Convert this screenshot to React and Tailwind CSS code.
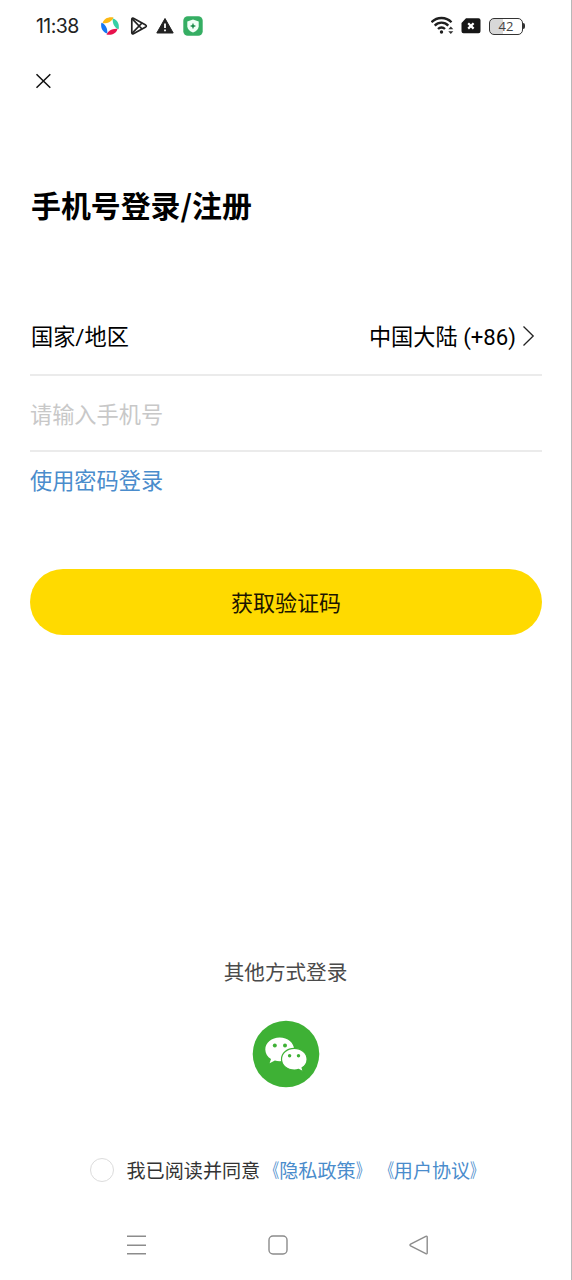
// Status bar along the top of the phone
function StatusBar() {
  return (
    <div className="flex items-center justify-between h-[52px] pl-[36px] pr-[46px]">
      <div className="flex items-center">
        <span className="w-[64px] pt-[2px] text-[19.500px] leading-none tracking-[-0.6px] text-[#222] font-['Inter',sans-serif]">11:38</span>
        <svg className="w-[20px] h-[20px]" viewBox="0 0 20 20">
          <path d="M2.500 7.300C3.500 2.500 8.500.5 13.500 1.400 12.500 4.800 8 7.600 2.500 7.300z" fill="#fcb813" />
          <path d="M12.700 2.500C17.500 3.500 19.700 8.500 18.600 13.200 15 12.200 12.200 8 12.700 2.500z" fill="#35cfa5" />
          <path d="M17.500 12.700C16.500 17.500 11.500 19.500 6.500 18.600 7.500 15.200 12 12.200 17.500 12.700z" fill="#e8124d" />
          <path d="M7.300 17.500C2.500 16.500.3 11.500 1.400 6.800 5 7.800 7.800 12 7.300 17.500z" fill="#1677f2" />
        </svg>
        <svg className="w-[18px] h-[20px] ml-[10px]" viewBox="0 0 18 20" fill="none" stroke="#222" strokeWidth="1.700" strokeLinejoin="round">
          <path d="M1.800 3.200v13.600c0 1 .8 1.400 1.600 1l12.300-6.900c.8-.5.8-1.300 0-1.800L3.400 2.200c-.8-.4-1.600 0-1.600 1z" />
          <path d="M2.200 2.800L12 13M2.200 17.200L12 7" />
        </svg>
        <svg className="w-[18px] h-[18px] ml-[8px]" viewBox="0 0 18 18">
          <path d="M9 1.500L17.200 16H.8z" fill="#222" stroke="#222" strokeLinejoin="round" />
          <path d="M9 6.500v4.500M9 12.500v1.800" stroke="#fff" strokeWidth="1.800" />
        </svg>
        <svg className="w-[20px] h-[20px] ml-[9px]" viewBox="0 0 20 20">
          <rect x=".3" y=".3" width="19.400" height="19.400" rx="4.500" fill="#35ae63" />
          <path d="M10 3.500l5.700 2v4.700c0 3-2.500 5-5.700 6.300-3.200-1.300-5.700-3.300-5.700-6.300V5.500z" fill="#f0fff6" />
          <path d="M10 6.800l.9 2.300 2.200.9-2.200.9-.9 2.300-.9-2.300-2.200-.9 2.200-.9z" fill="#1c8d4c" />
        </svg>
      </div>
      <div className="flex items-center">
        <svg className="w-[24px] h-[20px]" viewBox="0 0 24 20" fill="none" stroke="#1f1f1f" strokeWidth="2.300">
          <path d="M.5 6.200C6 .6 15 .6 20.500 6.200M3.700 9.600c3.800-3.900 9.800-3.900 13.600 0M7 13c2-2 5-2 7 0" />
          <circle cx="10.500" cy="16" r="1.700" fill="#1f1f1f" stroke="none" />
          <path d="M17.300 13.300l2.500-2.800 2.500 2.800zM17.300 15.300l2.500 2.800 2.500-2.800z" fill="#333" stroke="none" />
        </svg>
        <svg className="w-[20px] h-[16px] ml-[6px]" viewBox="0 0 20 16">
          <path d="M5 .3h12.500a2 2 0 012 2v11a2 2 0 01-2 2h-15a2 2 0 01-2-2V5z" fill="#161616" />
          <path d="M7.200 5.200l5.400 5.400M12.600 5.200l-5.400 5.400" stroke="#fff" strokeWidth="2.200" />
        </svg>
        <div className="flex items-center ml-[8px]">
          <div className="flex items-center justify-center w-[34px] h-[17px] rounded-[5px] border-[1.5px] border-[#333] bg-linear-to-r from-[#d8d8d8] from-42% to-white to-42% text-[13px] leading-none text-[#444] font-['Open_Sans',sans-serif]">42</div>
          <div className="w-[2px] h-[6px] rounded-r-sm bg-[#333]" />
        </div>
      </div>
    </div>
  );
}

function WeChatIcon() {
  return (
    <svg className="w-[68px] h-[68px]" viewBox="0 0 68 68">
      <circle cx="34" cy="34" r="33.300" fill="#3eb135" />
      <path d="M27.700 17.500c-8 0-14.400 5.400-14.400 12 0 3.900 2.200 7.300 5.700 9.500l-1.400 4.200 5.300-2.700c1.500.5 3.100.7 4.800.7 8 0 14.400-5.200 14.400-11.700s-6.400-12-14.400-12z" fill="#fff" />
      <path d="M42.300 28.300c-7.100 0-12.800 4.800-12.800 10.900S35.200 50 42.300 50c1.500 0 3-.2 4.300-.6l4.700 2.300-1.200-3.900c3.100-2 5-5.100 5-8.600 0-6.100-5.700-10.900-12.800-10.900z" fill="#fff" stroke="#3eb135" strokeWidth="1.200" />
      <g fill="#3eb135">
        <circle cx="22.800" cy="25.600" r="2" />
        <circle cx="33" cy="25.600" r="2" />
        <circle cx="37.600" cy="35.700" r="1.700" />
        <circle cx="46.500" cy="35.700" r="1.700" />
      </g>
    </svg>
  );
}

// Title-mark brackets are narrowed toward the text they enclose
function DocLink({ children }) {
  return (
    <a className="flex">
      <span className="origin-right scale-x-70">《</span>
      <span>{children}</span>
      <span className="origin-left scale-x-70">》</span>
    </a>
  );
}

// Android navigation keys
function NavBar() {
  return (
    <div className="flex items-center justify-between h-[22px] mt-[50px] pl-[126px] pr-[141px]">
      <svg className="w-[22px] h-[22px]" viewBox="0 0 22 22" stroke="#8c8c8c" strokeWidth="1.500">
        <path d="M1 2.300h19M1 11.200h19M1 19.800h19" />
      </svg>
      <svg className="w-[22px] h-[22px]" viewBox="0 0 22 22" fill="none" stroke="#8c8c8c" strokeWidth="1.400">
        <rect x="2" y="2" width="18" height="18" rx="4" />
      </svg>
      <svg className="w-[22px] h-[22px]" viewBox="0 0 22 22" fill="none" stroke="#8c8c8c" strokeWidth="1.400">
        <path d="M2.600 10.200L17.800 2.300q1.400-.6 1.400.9v15.600q0 1.500-1.400.9L2.600 11.800q-1.300-.8 0-1.600z" />
      </svg>
    </div>
  );
}

export default function App() {
  return (
    <div className="flex flex-col w-[572px] h-[1280px] bg-white border-r border-[#b8b8b8] overflow-hidden text-black font-['Noto_Sans_CJK_SC',sans-serif]">
      <StatusBar />

      <button className="w-[16px] h-[16px] mt-[21px] ml-[35px]" aria-label="关闭">
        <svg className="w-[16px] h-[16px]" viewBox="0 0 16 16" stroke="#111" strokeWidth="1.500">
          <path d="M1.500 1.200l13.800 13.600M15.300 1.200L1.500 14.800" />
        </svg>
      </button>

      <main className="flex flex-col pl-[30px] pr-[29px]">
        <h1 className="mt-[91px] pl-px text-[29.900px] leading-[48px] font-bold">手机号登录/注册</h1>

        <div className="flex items-center justify-between h-[78px] mt-[70px] pt-[4px] pr-[6px] border-b-2 border-[#ebebeb] text-[22.200px]">
          <span className="pl-px font-['Roboto','Noto_Sans_CJK_SC',sans-serif]">国家/地区</span>
          <div className="flex items-center">
            <span className="font-['Roboto','Noto_Sans_CJK_SC',sans-serif]">中国大陆 (+86)</span>
            <svg className="w-[14px] h-[22px] mb-[4px] ml-[6px]" viewBox="0 0 14 22" fill="none" stroke="#222" strokeWidth="1.300">
              <path d="M1.500 1.500l9.700 9.500-9.700 9.500" />
            </svg>
          </div>
        </div>
        <input
          className="h-[76px] pb-px border-b-2 border-[#ebebeb] text-[22.200px] outline-none placeholder:text-[#c8c8c8]"
          placeholder="请输入手机号"
        />
        <a className="mt-[11px] text-[22.200px] leading-[32px] text-[#4a8ccc]">使用密码登录</a>

        <button className="h-[66px] mt-[74px] pb-[2px] rounded-full bg-[#ffda00] text-[22px] text-[#1c1500]">获取验证码</button>
      </main>

      <section className="flex flex-col items-center mt-[321px]">
        <p className="text-[20.600px] leading-[30px] text-[#4a4a4a]">其他方式登录</p>
        <div className="mt-[34px]">
          <WeChatIcon />
        </div>
      </section>

      <div className="flex items-center h-[28px] mt-[68px] ml-[90px] text-[19.100px] text-[#333]">
        <span className="w-[24px] h-[24px] mr-[12.500px] rounded-full border-[1.5px] border-[#dcdcdc]" />
        <span>我已阅读并同意</span>
        <span className="flex text-[#4a8ccc]">
          <DocLink>隐私政策</DocLink>
          <DocLink>用户协议</DocLink>
        </span>
      </div>

      <NavBar />
    </div>
  );
}
